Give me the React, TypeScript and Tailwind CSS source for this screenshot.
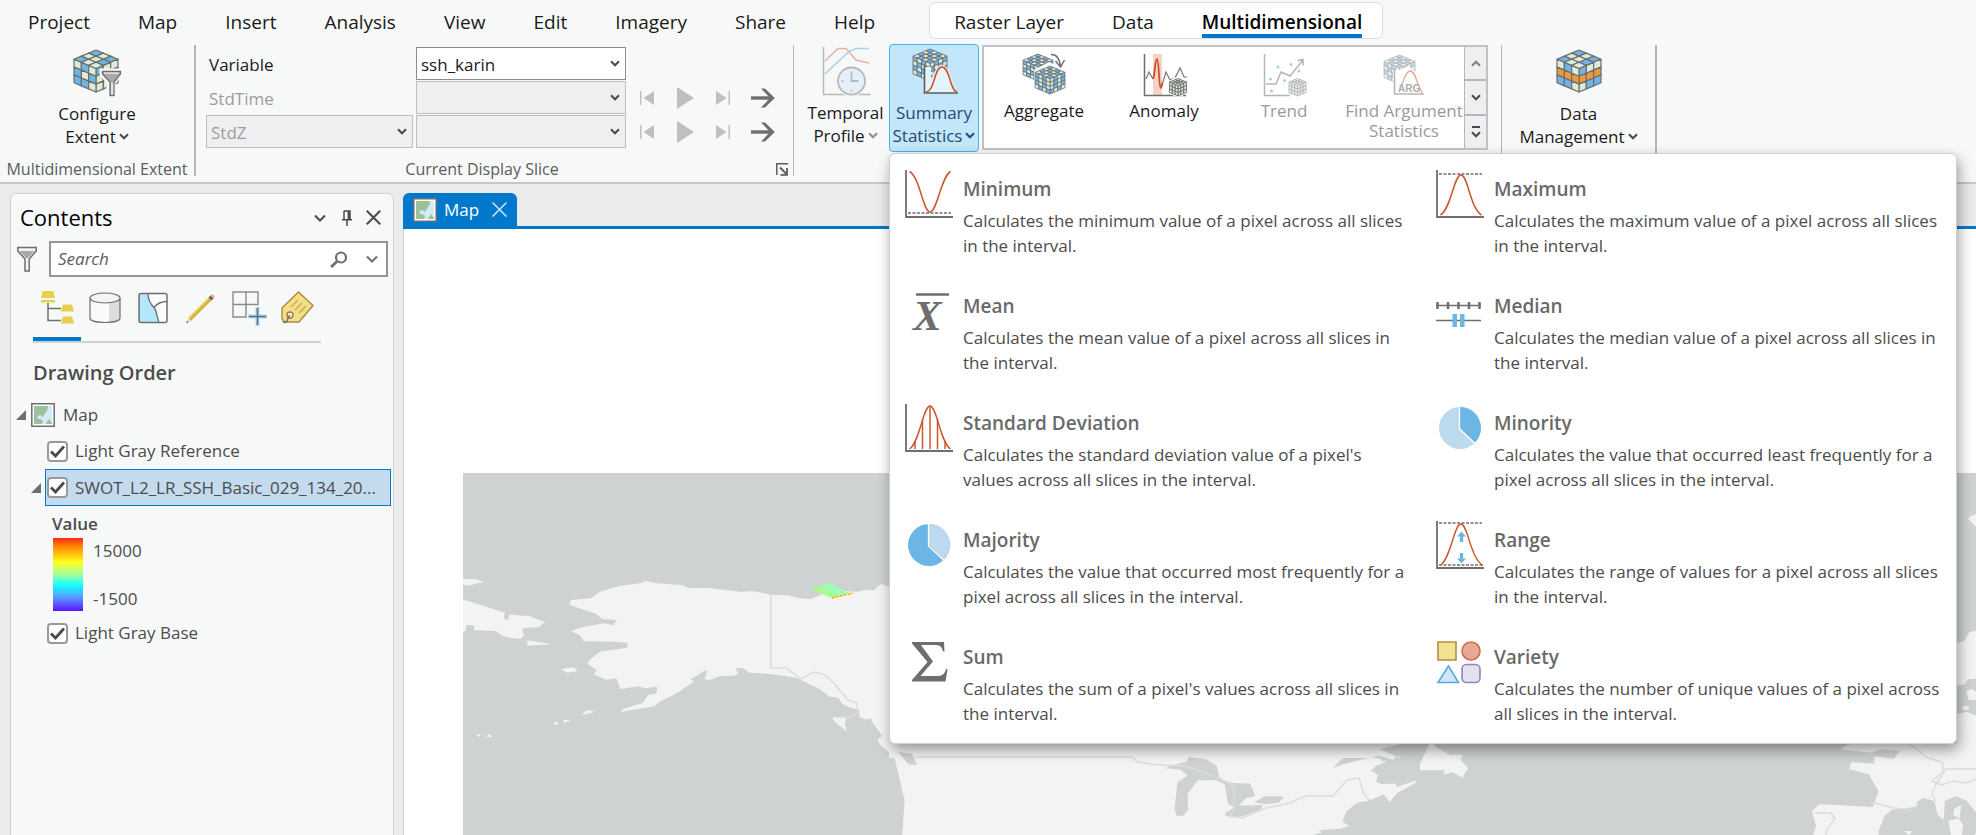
import React, { useState } from "react";

const CELL = { b: "#6cb5e4", g: "#dcecd6", o: "#ee9a3c", w: "#e4ece0" } as const;
type CellKey = keyof typeof CELL;

/* ---------- ribbon drawings ---------- */

function Cube({
  n,
  x,
  y,
  w,
  h,
  top,
  left,
  right,
  stroke = 1.2,
}: {
  n: number;
  x: number;
  y: number;
  w: number;
  h: number;
  top: string;
  left: string;
  right: string;
  stroke?: number;
}) {
  const hw = w / 2;
  const rise = w * 0.21;
  const body = h - rise * 2;
  const cells: React.ReactElement[] = [];
  const add = (key: string, c: string, pts: number[][]) =>
    cells.push(<polygon key={key} points={pts.map((p) => p.join(",")).join(" ")} fill={CELL[(c || "g") as CellKey]} />);
  const t = (i: number, j: number) => [x + hw + ((i - j) * hw) / n, y + ((i + j) * rise) / n];
  const l = (i: number, j: number) => [x + (i * hw) / n, y + rise + (i * rise) / n + (j * body) / n];
  const r = (i: number, j: number) => [x + hw + (i * hw) / n, y + 2 * rise - (i * rise) / n + (j * body) / n];
  for (let j = 0; j < n; j++)
    for (let i = 0; i < n; i++) {
      const k = j * n + i;
      add(`t${k}`, top[k], [t(i, j), t(i + 1, j), t(i + 1, j + 1), t(i, j + 1)]);
      add(`l${k}`, left[k], [l(i, j), l(i + 1, j), l(i + 1, j + 1), l(i, j + 1)]);
      add(`r${k}`, right[k], [r(i, j), r(i + 1, j), r(i + 1, j + 1), r(i, j + 1)]);
    }
  return (
    <g stroke="#6e6e6e" strokeWidth={stroke} strokeLinejoin="round">
      {cells}
    </g>
  );
}

const T3 = "bgbggbbgg";
const T4 = "bgbggbgbbgbggbgb";
const L4 = "bgbggbgbbgbggbgb";
const R4 = "gbgbbgbggbgbbgbg";

function Ico({ size = 48, children, className = "" }: { size?: number; children: React.ReactNode; className?: string }) {
  return (
    <svg
      width={size}
      height={size}
      viewBox="0 0 48 48"
      fill="none"
      className={`shrink-0 overflow-visible ${className}`}
      aria-hidden="true"
    >
      {children}
    </svg>
  );
}

const ConfigureIcon = () => (
  <Ico>
    <Cube n={3} x={1} y={2} w={44} h={42} top={T3} left="gbgbgbbbg" right="bgggggggg" />
    <path d="M28 22h20v4l-7 9v13h-6V35l-7-9z" fill="#f7f9f8" stroke="#f7f9f8" strokeWidth="3" />
    <path d="M29.500 23.500h18v2.500l-6.500 8v13.500h-4V34l-7.500-8z" fill="#a8a8a8" stroke="#6e6e6e" strokeWidth="1.300" />
    <path d="M31 24.500h15v1.200H31z" fill="#f2f2f2" />
    <path d="M38 34.500h2.300v12H38z" fill="#e4e4e4" />
  </Ico>
);

const TemporalIcon = () => (
  <Ico className="opacity-45">
    <path d="M1.500 0v47.500h47" stroke="#6e6e6e" strokeWidth="1.500" />
    <path d="M3 14 16 1.500h8L34 13l13 3" stroke="#dd5a33" strokeWidth="1.500" />
    <path d="M3 27 27 4.500 34 1.500h13" stroke="#4ba3dd" strokeWidth="1.500" />
    <circle cx="29.500" cy="34" r="15.500" fill="#f7f9f8" />
    <circle cx="29.500" cy="34" r="13.500" fill="#cfe3f6" stroke="#6e6e6e" strokeWidth="1.800" />
    <path d="M29.500 24.500v9.500h7" stroke="#6e6e6e" strokeWidth="1.800" />
    <path d="M19.500 34h2M29.500 42.500v2" stroke="#6e6e6e" strokeWidth="1.500" />
  </Ico>
);

const SummaryIcon = () => (
  <Ico>
    <Cube n={4} x={3} y={2} w={34} h={32} top={T4} left={L4} right={R4} stroke={0.9} />
    <path d="M15 20v26h32L38 22q-6-8-12 0l-5 10V20z" fill="#e4f3fc" />
    <path d="M14.500 18v28H48" stroke="#5c5c5c" strokeWidth="1.600" />
    <path d="M16 45c9-1 8-25 16-25s8 24 15 25" stroke="#cf4f28" strokeWidth="1.500" />
  </Ico>
);

const AggregateIcon = () => (
  <Ico>
    <Cube n={4} x={3} y={4} w={30} h={27} top={T4} left={L4} right={R4} stroke={0.8} />
    <path d="M14 20 29 12l18 8v20L30 47 14 40z" fill="#fff" />
    <Cube n={4} x={15} y={16} w={30} h={28} top={T4} left="bgbgbgbgbgbggbgb" right="gbgbgbgbgbgbbgbg" stroke={0.8} />
    <path d="M31 4.500q8-.500 9.500 12M35.500 11l5 6 4-7" stroke="#6e6e6e" strokeWidth="1.500" />
  </Ico>
);

const AnomalyIcon = () => (
  <Ico>
    <path d="M13 4h9v41h-9z" fill="#f3d3c8" />
    <path d="M4.500 4v41.500H46" stroke="#6e6e6e" strokeWidth="1.500" />
    <path d="M6 29l3-7 4 7M22 35l4-13 4 8 5-2 5-10 4 9h3" stroke="#777" strokeWidth="1.200" />
    <path d="M13 29c2-4 2-20 4-20s2 29 3.500 29 1-3 2-5" stroke="#cf4f28" strokeWidth="1.800" />
    <circle cx="38" cy="37" r="10" fill="#fff" />
    <Cube n={3} x={29.5} y={28.5} w={17} h={17.5} top="ggggggggg" left="ggggggggg" right="ggggggggg" stroke={0.9} />
  </Ico>
);

const TrendIcon = () => (
  <Ico className="opacity-50">
    <path d="M4.500 4v41.500H30" stroke="#6e6e6e" strokeWidth="1.500" />
    <path d="M6 34h10l5-12 9 4L43 10M37.500 10.500 43 9.500v6" stroke="#6e6e6e" strokeWidth="1.500" />
    <g fill="#4ba3dd">
      <circle cx="18" cy="17" r="1.500" />
      <circle cx="31" cy="14.500" r="1.500" />
      <circle cx="39" cy="21" r="1.500" />
      <circle cx="10.500" cy="29" r="1.500" />
      <circle cx="24.500" cy="30.500" r="1.500" />
      <circle cx="11.500" cy="41" r="1.500" />
    </g>
    <Cube n={3} x={29} y={28.5} w={17} h={17.5} top="ggggggggg" left="ggggggggg" right="ggggggggg" stroke={0.9} />
  </Ico>
);

const ArgumentIcon = () => (
  <Ico className="opacity-50">
    <Cube n={4} x={4} y={5} w={31} h={29} top={T4} left={L4} right={R4} stroke={0.8} />
    <path d="M13 20 20 20 28 16 36 22 42 34H13z" fill="#fff" />
    <path d="M14.500 19v25H44" stroke="#6e6e6e" strokeWidth="1.600" />
    <path d="M22 34c3-6 4-13 8-13s6 7 8 13l4 9" stroke="#cf4f28" strokeWidth="1.300" />
    <text x="18" y="42" fontFamily="Liberation Sans" fontWeight="700" fontSize="10" fill="#5c5c5c">
      ARG
    </text>
  </Ico>
);

const DataIcon = () => (
  <Ico>
    <Cube n={3} x={2} y={2} w={44} h={42} top={T3} left="gbgooobbg" right="bggooogbb" />
  </Ico>
);

/* ---------- statistic drawings ---------- */

const Axes = () => <path d="M1 0v47h47" stroke="#6e6e6e" strokeWidth="1.800" />;

const stats: { name: string; text: string; icon: React.ReactElement }[] = [
  {
    name: "Minimum",
    text: "Calculates the minimum value of a pixel across all slices in the interval.",
    icon: (
      <Ico>
        <Axes />
        <path d="M3 43h43" stroke="#6e6e6e" strokeWidth="1.500" strokeDasharray="3 1.500" />
        <path d="M4.500 1.500C15 7 18 42 25 42S36 7 45.500 1.500" stroke="#d0532c" strokeWidth="1.500" />
      </Ico>
    ),
  },
  {
    name: "Maximum",
    text: "Calculates the maximum value of a pixel across all slices in the interval.",
    icon: (
      <Ico>
        <Axes />
        <path d="M3 4h43" stroke="#6e6e6e" strokeWidth="1.500" strokeDasharray="3 1.500" />
        <path d="M4.500 45C15 39 18 5 25 5s9 33 20.500 40" stroke="#d0532c" strokeWidth="1.500" />
      </Ico>
    ),
  },
  {
    name: "Mean",
    text: "Calculates the mean value of a pixel across all slices in the interval.",
    icon: (
      <Ico>
        <path d="M11 7.500h33" stroke="#6e6e6e" strokeWidth="2.500" />
        <text x="8" y="43" fontFamily="Liberation Serif" fontStyle="italic" fontWeight="700" fontSize="43" fill="#6e6e6e">
          X
        </text>
      </Ico>
    ),
  },
  {
    name: "Median",
    text: "Calculates the median value of a pixel across all slices in the interval.",
    icon: (
      <Ico>
        <path d="M0 18.500h45M0 33.500h45" stroke="#6e6e6e" strokeWidth="1.500" />
        <path d="M1.500 15v7M12 15v7M22.500 15v7M33 15v7M43.500 15v7" stroke="#6e6e6e" strokeWidth="2.500" />
        <path d="M16.500 27H21v13h-4.500zM24 27h4.500v13H24z" fill="#6cb5e4" />
      </Ico>
    ),
  },
  {
    name: "Standard Deviation",
    text: "Calculates the standard deviation value of a pixel's values across all slices in the interval.",
    icon: (
      <Ico>
        <Axes />
        <path d="M4.500 45C15 38 18 2 25 2s10 36 20.500 43" stroke="#d0532c" strokeWidth="1.400" />
        <path d="M10 37v8M17.500 15v30M25 2v43M32.500 15v30M40 37v8" stroke="#d0532c" strokeWidth="1.500" />
      </Ico>
    ),
  },
  {
    name: "Minority",
    text: "Calculates the value that occurred least frequently for a pixel across all slices in the interval.",
    icon: (
      <Ico>
        <circle cx="24" cy="24" r="21" fill="#bcdaee" />
        <path d="M24 24V3a21 21 0 0 1 14.800 35.800z" fill="#6cb5e4" />
        <path d="M23.500 3v22L39 39.500" stroke="#fff" strokeWidth="1.300" />
      </Ico>
    ),
  },
  {
    name: "Majority",
    text: "Calculates the value that occurred most frequently for a pixel across all slices in the interval.",
    icon: (
      <Ico>
        <circle cx="24" cy="24" r="21" fill="#6cb5e4" />
        <path d="M24 24V3a21 21 0 0 1 14.800 35.800z" fill="#bcdaee" />
        <path d="M23.500 3v22L39 39.500" stroke="#fff" strokeWidth="1.300" />
      </Ico>
    ),
  },
  {
    name: "Range",
    text: "Calculates the range of values for a pixel across all slices in the interval.",
    icon: (
      <Ico>
        <Axes />
        <path d="M3 2h43M3 44h43" stroke="#6e6e6e" strokeWidth="1.500" strokeDasharray="3 1.500" />
        <path d="M4.500 44C15 37 18 3 25 3s9 34 22 41.500" stroke="#d0532c" strokeWidth="1.400" />
        <path d="M25.500 10.500l4.500 5h-2.800v5.500h-3.400v-5.500H21zM25.500 42.500l-4.500-5h2.800V32h3.400v5.500H30z" fill="#6cb5e4" />
      </Ico>
    ),
  },
  {
    name: "Sum",
    text: "Calculates the sum of a pixel's values across all slices in the interval.",
    icon: (
      <Ico>
        <path d="M7 4h32l.5 9.500H38C37 9 35 7 30.500 7H16l12 16.500L15.500 38H33c5 0 7-3 8-7h1.500l-2 12.500H7V42l15.500-18L7 5.500z" fill="#6e6e6e" />
      </Ico>
    ),
  },
  {
    name: "Variety",
    text: "Calculates the number of unique values of a pixel across all slices in the interval.",
    icon: (
      <Ico>
        <path d="M2 4h18v18H2z" fill="#f1e390" stroke="#b98a44" strokeWidth="1.600" />
        <circle cx="35" cy="13" r="9" fill="#e8a896" stroke="#cf6a4c" strokeWidth="1.600" />
        <path d="M12.500 28 22.500 44.500H2z" fill="#cfe6f6" stroke="#5ba9dc" strokeWidth="1.600" />
        <rect x="26" y="26.500" width="18" height="18" rx="4.500" fill="#e4e0f0" stroke="#9583bf" strokeWidth="1.600" />
      </Ico>
    ),
  },
];

/* ---------- small drawings ---------- */

const Chevron = ({ className = "" }: { className?: string }) => (
  <svg width="10" height="7" viewBox="0 0 10 7" fill="none" className={`shrink-0 ${className}`} aria-hidden="true">
    <path d="M1 1.300l4 4 4-4" stroke="currentColor" strokeWidth="2" />
  </svg>
);

const MapThumb = () => (
  <svg width="24" height="24" viewBox="0 0 24 24" className="shrink-0" aria-hidden="true">
    <path d="M.8.8h22.400v22.400H.8z" fill="#fff" stroke="#6e6e6e" strokeWidth="1.500" />
    <path d="M3 3h18v18H3z" fill="#9bc19b" />
    <path d="M17 3h4v16h-1.500l-1-3-2 2-1.500 3h-4l1-3-2.500-2H7l-.5-3 3-1 2 2 3-4 2-3z" fill="#d3ebf8" />
  </svg>
);

const FunnelIcon = () => (
  <svg width="20" height="26" viewBox="0 0 20 26" fill="none" className="shrink-0" aria-hidden="true">
    <path d="M.8 1.500h18.400V5l-7 8v12H8V13L.8 5z" fill="#f4f4f4" stroke="#6e6e6e" strokeWidth="1.500" />
    <path d="M2.500 5h15L11 12H9z" fill="#a8a8a8" />
  </svg>
);

const MediaRow = () => (
  <div className="flex h-[33px] items-center">
    <button aria-label="Previous slice" className="w-4">
      <svg width="14" height="14" viewBox="0 0 14 14" fill="#bfbfbf">
        <path d="M0 0h1.500v14H0zM14 0v14L3.500 7z" />
      </svg>
    </button>
    <button aria-label="Play" className="ml-[21px] w-5">
      <svg width="17" height="22" viewBox="0 0 17 22" fill="#bfbfbf">
        <path d="M0 0l17 11L0 22z" />
      </svg>
    </button>
    <button aria-label="Next slice" className="ml-[19px] w-4">
      <svg width="14" height="14" viewBox="0 0 14 14" fill="#bfbfbf">
        <path d="M12.500 0H14v14h-1.500zM0 0v14l10.500-7z" />
      </svg>
    </button>
    <button aria-label="Step forward" className="ml-[19px]">
      <svg width="24" height="20" viewBox="0 0 24 20" fill="none" stroke="#6e6e6e">
        <path d="M0 10h21" strokeWidth="3.400" />
        <path d="M10 .5h4L23.800 10 14 19.500h-4L19 10z" fill="#6e6e6e" stroke="none" />
      </svg>
    </button>
  </div>
);

function Combo({ label, value, enabled = false, className }: { label: string; value: string; enabled?: boolean; className: string }) {
  return (
    <span className={`grid items-center ${className}`}>
      <select
        aria-label={label}
        defaultValue={value}
        disabled={!enabled}
        className={`col-start-1 row-start-1 h-[33px] w-full appearance-none border pl-1 pt-0.5 leading-7 opacity-100 ${
          enabled ? "border-[#8c8c8c] bg-white text-[#1a1a1a]" : "border-[#bcbec2] bg-[#eeeff1] text-[#9c9c9c]"
        }`}
      >
        <option value={value}>{value}</option>
      </select>
      <Chevron className="pointer-events-none col-start-1 row-start-1 mr-1.5 justify-self-end text-[#4a4a4a]" />
    </span>
  );
}

/* ---------- ribbon ---------- */

const tabs = ["Project", "Map", "Insert", "Analysis", "View", "Edit", "Imagery", "Share", "Help"];

function RibbonTabs() {
  return (
    <nav className="flex h-11 items-center text-[19px] leading-6 text-[#1a1a1a]">
      <div className="flex gap-12 pl-7">
        {tabs.map((t) => (
          <button key={t}>{t}</button>
        ))}
      </div>
      <div className="ml-[54px] mt-[-3px] flex h-[37px] gap-12 rounded-md border border-[#dcdedd] bg-white pl-6 pr-5">
        <button className="pt-[3px]">Raster Layer</button>
        <button className="pt-[3px]">Data</button>
        <button className="border-b-4 border-[#0079cc] pt-[7px] font-semibold text-black">Multidimensional</button>
      </div>
    </nav>
  );
}

const Divider = ({ className = "w-px" }: { className?: string }) => <div className={`mt-px mb-1.5 shrink-0 bg-[#b4b5b5] ${className}`} />;

function BigButton({
  icon,
  lines,
  className = "",
  chevron = "text-[#4a4a4a]",
}: {
  icon: React.ReactElement;
  lines: [string, string];
  className?: string;
  chevron?: string;
}) {
  return (
    <button className={`flex flex-col items-center leading-[23px] ${className}`}>
      {icon}
      <span className="mt-1.5">{lines[0]}</span>
      <span className="flex items-center gap-[3px] whitespace-nowrap">
        {lines[1]}
        <Chevron className={chevron} />
      </span>
    </button>
  );
}

function StatisticsMenu() {
  return (
    <div
      role="menu"
      className="absolute left-0 top-full z-10 grid w-[1068px] grid-cols-2 rounded-md border border-[#d0d1d1] bg-white p-0.5 text-left shadow-[2px_6px_14px_rgba(0,0,0,0.38)]"
    >
      {stats.map((s) => (
        <button key={s.name} role="menuitem" className="flex h-[117px] items-start gap-[10px] pl-[13px] pt-[14px] text-left">
          {s.icon}
          <span className="flex flex-col pt-[7px]">
            <span className="text-[19px] font-semibold leading-6 text-[#696969]">{s.name}</span>
            <span className="mt-[7px] max-w-[452px] text-[17px] leading-[25px] text-[#4c4c4c]">{s.text}</span>
          </span>
        </button>
      ))}
    </div>
  );
}

const gallery = [
  { name: "Aggregate", icon: <AggregateIcon />, on: true },
  { name: "Anomaly", icon: <AnomalyIcon />, on: true },
  { name: "Trend", icon: <TrendIcon />, on: false },
  { name: "Find Argument Statistics", icon: <ArgumentIcon />, on: false },
];

function Ribbon() {
  return (
    <header className="border-b-2 border-[#c6c6c8] bg-[#f7f9f8]">
      <RibbonTabs />
      <div className="flex h-[138px] text-[17px] text-[#1a1a1a]">
        <section className="flex w-[194px] shrink-0 flex-col items-center justify-between pb-0.5">
          <BigButton icon={<ConfigureIcon />} lines={["Configure", "Extent"]} className="pt-1" />
          <h2 className="whitespace-nowrap text-[16px] leading-[22px] text-[#5c5c5c]">Multidimensional Extent</h2>
        </section>
        <Divider className="w-0.5" />
        <section className="flex w-[597px] shrink-0 flex-col justify-between pb-0.5 pl-[10px]">
          <div className="flex gap-[14px] pt-[3px]">
            <div className="grid grid-cols-[207px_210px] items-center gap-x-[3px] gap-y-px">
              <span className="pl-[3px] pt-0.5">Variable</span>
              <Combo label="Variable" value="ssh_karin" enabled className="w-[210px]" />
              <span className="pl-[3px] pt-0.5 text-[#9c9c9c]">StdTime</span>
              <Combo label="StdTime" value="" className="w-[210px]" />
              <Combo label="Dimension" value="StdZ" className="w-[207px]" />
              <Combo label="StdZ" value="" className="w-[210px]" />
            </div>
            <div className="flex flex-col gap-px pt-[34px]">
              <MediaRow />
              <MediaRow />
            </div>
          </div>
          <div className="flex items-center pr-[5px] text-[16px] leading-[22px] text-[#5c5c5c]">
            <h2 className="flex-1 pr-[18px] text-center">Current Display Slice</h2>
            <button aria-label="Open slice options">
              <svg width="12" height="13" viewBox="0 0 12 13" fill="none" stroke="#5c5c5c">
                <path d="M.8 12V.8H12" strokeWidth="1.500" />
                <path d="M4 4.500l6.500 6.500M11 5v6.800H4.500" strokeWidth="1.800" />
              </svg>
            </button>
          </div>
        </section>
        <Divider />
        <BigButton
          icon={<TemporalIcon />}
          lines={["Temporal", "Profile"]}
          className="w-[95px] shrink-0 pl-2 pt-[3px]"
          chevron="text-[#8c8c8c]"
        />
        <div className="relative h-[109px] w-[90px] shrink-0">
          <BigButton
            icon={<SummaryIcon />}
            lines={["Summary", "Statistics"]}
            className="h-[108px] w-full rounded border border-[#4bb1ec] bg-[#c2e6fa] pt-[2px] text-[#264a73]"
            chevron="text-[#264a73]"
          />
          <StatisticsMenu />
        </div>
        <div className="ml-[3px] mt-px flex h-[105px] shrink-0 border-2 border-[#c0c2c6] bg-white leading-5">
          {gallery.map((g) => (
            <button
              key={g.name}
              className={`flex w-[120px] flex-col items-center pt-[3px] ${g.on ? "text-[#1a1a1a]" : "text-[#9a9a9a]"}`}
            >
              {g.icon}
              <span className="mt-[3px]">{g.name}</span>
            </button>
          ))}
          <div className="flex w-[22px] flex-col divide-y-2 divide-[#b4b6bc] border-l border-[#b4b6bc] bg-[#eeeff1] text-[#4a4a4a]">
            <button aria-label="Scroll up" className="flex flex-1 items-center justify-center text-[#808080]">
              <Chevron className="rotate-180" />
            </button>
            <button aria-label="Scroll down" className="flex flex-1 items-center justify-center">
              <Chevron />
            </button>
            <button aria-label="More" className="flex flex-1 flex-col items-center justify-center gap-[3px]">
              <span className="h-[2px] w-2 bg-[#4a4a4a]" />
              <Chevron />
            </button>
          </div>
        </div>
        <Divider className="ml-[13px] w-px" />
        <BigButton icon={<DataIcon />} lines={["Data", "Management"]} className="w-[153px] shrink-0 pt-1" />
        <Divider className="w-0.5" />
      </div>
    </header>
  );
}

/* ---------- contents pane ---------- */

const views = [
  {
    label: "List by drawing order",
    icon: (
      <>
        <path d="M4 1h10l2 7H2zM2 10h14v2.500H2z" fill="#e6cf4e" />
        <path d="M9 13v17.500h13M9 18.500h13" fill="none" stroke="#6e6e6e" strokeWidth="1.500" />
        <path d="M24 14.500h9l2 7H22zM24 26.500h9l2 7H22z" fill="#e6cf4e" />
      </>
    ),
  },
  {
    label: "List by data source",
    icon: (
      <>
        <path d="M3 8v20c0 6 30 6 30 0V8z" fill="#fafafa" />
        <path d="M22 12c6 0 10-2 11-4v20c-1 3-6 4-11 4.500z" fill="#dcdcdc" />
        <path d="M3 8v20c0 6 30 6 30 0V8" fill="none" stroke="#6e6e6e" strokeWidth="1.200" />
        <ellipse cx="18" cy="8" rx="15" ry="5" fill="#f4f4f4" stroke="#6e6e6e" strokeWidth="1.200" />
      </>
    ),
  },
  {
    label: "List by selection",
    icon: (
      <>
        <rect x="4" y="3.500" width="28" height="29" rx="2" fill="#fbfbfb" />
        <path d="M4 3.500h9c0 5 2 10 6 14 3 4 3 10 5 15H4z" fill="#b3e8fa" />
        <path d="M13 3.500c0 5 2 10 6 14 3 4 3 10 5 15M19 17.500c3-4 7-6 13-6" fill="none" stroke="#6e6e6e" strokeWidth="1.300" />
        <rect x="4" y="3.500" width="28" height="29" rx="2" fill="none" stroke="#6e6e6e" strokeWidth="1.500" />
      </>
    ),
  },
  {
    label: "List by editing",
    icon: (
      <>
        <path d="M5 28 25.500 7.500l3 3L8 31z" fill="#e2c750" />
        <path d="M7 30 27.500 9.500" stroke="#c9ac3e" strokeWidth="1.200" />
        <path d="M5 28l3 3-5 2z" fill="#f1d9b8" />
        <path d="M4 31l1.600 1.100L3 33.200z" fill="#555" />
        <path d="M25.500 7.500l2-2 3 3-2 2z" fill="#6a5f62" />
        <path d="M27.500 5.500c2-3 6 1 3 3z" fill="#e8a393" />
      </>
    ),
  },
  {
    label: "List by snapping",
    icon: (
      <>
        <path d="M2 2h25v12.500H2zM2 14.500h13V27H2zM15 2v12.500" fill="none" stroke="#8a8a8a" strokeWidth="1.400" />
        <path d="M26.500 17v19M17 26.500h19" stroke="#a9d9f8" strokeWidth="4" />
        <path d="M26.500 18v17M18 26.500h17" stroke="#5c6d7a" strokeWidth="1.500" />
      </>
    ),
  },
  {
    label: "List by labeling",
    icon: (
      <>
        <path d="M3 18 19.500 2 34 15.500 20 32H6l-3-3z" fill="#f1e08a" stroke="#b5853f" strokeWidth="1.400" />
        <path d="M12 17l7-7M16 20l7-7M20 23l7-7" stroke="#d0a24c" strokeWidth="1.200" />
        <circle cx="11" cy="25" r="3" fill="#fdf8e0" stroke="#a5743a" strokeWidth="1.300" />
        <path d="M11 25c-2 2-2 4-3 6s-4 2-4 0" fill="none" stroke="#6e6e6e" strokeWidth="1.300" />
      </>
    ),
  },
];

function LayerCheck({ id, label, className = "" }: { id: string; label: string; className?: string }) {
  const [on, setOn] = useState(true);
  return (
    <div className={`flex min-w-0 items-center gap-[7px] ${className}`}>
      <span className="grid shrink-0 place-items-center">
        <input
          id={id}
          type="checkbox"
          checked={on}
          onChange={() => setOn(!on)}
          className="col-start-1 row-start-1 size-[21px] appearance-none rounded-[4px] border-2 border-[#9a9a9a] bg-white"
        />
        {on && (
          <svg width="15" height="13" viewBox="0 0 15 13" fill="none" className="pointer-events-none col-start-1 row-start-1">
            <path d="M1 6.500l4.500 4.500L14 1.500" stroke="#4a4a4a" strokeWidth="2.800" />
          </svg>
        )}
      </span>
      <label htmlFor={id} className="truncate">
        {label}
      </label>
    </div>
  );
}

const Expander = () => (
  <button aria-label="Collapse" className="shrink-0">
    <svg width="10" height="10" viewBox="0 0 10 10" fill="#6e6e6e">
      <path d="M10 0v10H0z" />
    </svg>
  </button>
);

function Contents() {
  return (
    <aside className="flex w-[384px] shrink-0 flex-col rounded-t-md border border-b-0 border-[#d0d1d1] bg-[#f7f9f8] text-[17px] text-[#4c4c4c]">
      <div className="flex h-[47px] items-center pl-[9px] pr-3 text-[#4a4a4a]">
        <h1 className="flex-1 text-[22px] text-black">Contents</h1>
        <button aria-label="Pane options" className="mr-4">
          <svg width="12" height="8" viewBox="0 0 12 8" fill="none" stroke="currentColor" strokeWidth="2">
            <path d="M1 1.500l5 5 5-5" />
          </svg>
        </button>
        <button aria-label="Pin" className="mr-[14px]">
          <svg width="10" height="16" viewBox="0 0 10 16" fill="none" stroke="currentColor" strokeWidth="1.500">
            <path d="M2 1h6v8.500M2 1v8.500M0 9.800h10M5 10v6" />
            <path d="M6.800 1v8.500" strokeWidth="2.400" />
          </svg>
        </button>
        <button aria-label="Close">
          <svg width="15" height="15" viewBox="0 0 15 15" fill="none" stroke="currentColor" strokeWidth="2">
            <path d="M.8.8l13.400 13.400M14.200.8.8 14.200" />
          </svg>
        </button>
      </div>
      <div className="flex items-center gap-3 pl-1.5 pr-[5px]">
        <FunnelIcon />
        <div className="flex h-9 flex-1 items-center border-2 border-[#949494] bg-white pl-[7px] pr-2">
          <input type="search" aria-label="Search" placeholder="Search" className="min-w-0 flex-1 italic outline-none placeholder:text-[#5c5c5c]" />
          <svg width="18" height="17" viewBox="0 0 18 17" fill="none" stroke="#6e6e6e" aria-hidden="true">
            <circle cx="11" cy="6.500" r="5" strokeWidth="2.200" />
            <path d="M7 10.500 1 16" strokeWidth="2.800" />
          </svg>
          <button aria-label="Search options" className="ml-[18px] text-[#6e6e6e]">
            <svg width="12" height="8" viewBox="0 0 12 8" fill="none" stroke="currentColor" strokeWidth="2">
              <path d="M1 1.500l5 5 5-5" />
            </svg>
          </button>
        </div>
      </div>
      <div className="ml-[22px] mt-[13px] flex w-[288px] border-b-2 border-[#d0d2d2]">
        {views.map((v, i) => (
          <button
            key={v.label}
            aria-label={v.label}
            className={`flex h-[51px] w-12 justify-center border-b-4 ${i === 0 ? "-mb-px border-[#0079cc]" : "border-transparent"}`}
          >
            <svg width="36" height="36" viewBox="0 0 36 36" aria-hidden="true">
              {v.icon}
            </svg>
          </button>
        ))}
      </div>
      <h2 className="mt-4 pl-[22px] text-[20px] font-semibold leading-7">Drawing Order</h2>
      <div className="mt-[10px] flex h-9 items-center pl-[5px]">
        <Expander />
        <span className="ml-[5px]">
          <MapThumb />
        </span>
        <span className="ml-2">Map</span>
      </div>
      <LayerCheck id="layer-reference" label="Light Gray Reference" className="h-9 pl-9" />
      <div className="flex items-center pl-5">
        <Expander />
        <LayerCheck
          id="layer-swot"
          label="SWOT_L2_LR_SSH_Basic_029_134_20..."
          className="ml-1 mr-0.5 h-[37px] flex-1 border border-[#007ac2] bg-[#c4daee] pl-px"
        />
      </div>
      <div className="pl-[41px] pt-1">
        <h3 className="font-semibold leading-7">Value</h3>
        <div className="flex gap-[10px] pl-px">
          <div className="h-[73px] w-[30px] bg-[linear-gradient(to_bottom,#ff2a1a_0%,#ff8a00_12%,#ffff1e_33%,#a0ff9c_50%,#10ffff_65%,#5a96ff_82%,#5a10ff_100%)]" />
          <div className="flex flex-col justify-between pt-px leading-6">
            <span>15000</span>
            <span>-1500</span>
          </div>
        </div>
      </div>
      <LayerCheck id="layer-base" label="Light Gray Base" className="mt-1 h-9 pl-9" />
    </aside>
  );
}

/* ---------- map ---------- */

function WorldMap() {
  return (
    <svg
      className="min-h-0 w-full flex-1 bg-white"
      viewBox="404 228 1572 607"
      preserveAspectRatio="xMinYMin slice"
      role="img"
      aria-label="Light gray world map"
    >
      <path d="M463 472h1600v500H463z" fill="#ced2d2" />
      <g fill="#f3f3f3">
        <g transform="translate(440 440) scale(.33333)">
          <path d="M69 414l36-1 26 10-26 6-20 5-16-2zM69 475l125 40-2 18 12 4 4-17 20 3 40 2 47 19-20 15-45 2-3 9 5 13-10 10-25-1-30-8-20-14-65-2v-15l-22-1-3 15-8 8zM262 598l74 12-74 4zM363 684l40-5 8 12-30 4zM340 851l6-10 11 8zM370 836l22 2-20 8zM425 823l15-16 25 5zM108 881l10 8 4-9zM138 888l10-9 10 8zM666 746l25-3 30-17 7 20-44 24zM1178 827l40 4-3 20 5 20-38-30z" />
          <path d="M388 491l6-14 60-5 25-20 60-17 62-8 18-7 30 7 77 5 22 9 60 0 90 11 45-1 50 10 50 2 30 8 40 3 60-25 80 3 20-5 30 1 20-20 80 30v500l-40-15-30-20-15-14-5-15 14-9-32-45-1-8-15 4-21-9v-20l-30-8-20-10-12-18-30-5-10-10-25-16-60-28-33-7-60-7-50-3-17-13-25 0 10 16-15 6-40 1-30 12-17-2 8-30-50 30 10 8-45 28-55 30-20 15-100 17 5-8 40-13 20-5 18-25 25-5 1-20-35 5-20-6-55 8-12-32-30 4-38-16 9-12-25-18 0-10 35-28 82-12v-14l-35-4-95-1-12-18-27-12 40-14 60-10 25 6 14-16-46-3-15-14z" />
        </g>
        <path d="M889 710h531v47H889z" />
        <g transform="translate(890 450) scale(.33807 .33333)">
          <path d="M0 860h1568l-175 32-60 35-25 24 60-19 90-20-5 18 20-1-35 15-15 15 20 12-5 22 18 6 45-1 50-32 2 20 12 5-65 35-22 28-18-24-40 18-40 8-30 25-12 32 22 12-30 8-62 5 10 6-40 12-15 15-10 60H50l-17-28 10-155L10 905 0 870z" />
        </g>
      </g>
      <g transform="translate(890 450) scale(.33807 .33333)" fill="#ced2d2">
        <path d="M1568 870h100v330h-100v-170l-25-10 15-32-60 20-2-60-30-20-40-10 60-10 40 30-8-15-70-28 80-20zM25 903l40 6 15 32-22 0-10-8zM788 974l40-30 50-12 4-14 50 6 35 20 8 40 40 12 50 2 15 36-15 6-10 0-30 30-25-10-10-60-25-12-55 0-30 40 2 50-14 16-20 0-6-20 8-80 30-20-20-18-40-4zM990 1086l40-22 72-2-5 14-50 18-30 6-25-6zM1078 1054l30-18 40 0 18 2-15 16-40 6z" />
        <path d="M1408 885l90 30-10 12-70-22z" fill="#f3f3f3" />
      </g>
      <g fill="#f3f3f3" transform="translate(1420 450) scale(.35461 .33333)">
        <path d="M30 870l20 22 35 20h35l-5 15 20 25-15 28-30-16-25 8 5-14H0v-20z" />
        <path d="M1185 895l30-18h500v300h-220l-5-60-30-25-10-42-30-10-18 12-2 15-70 10-20 18-16 42-2 50h-195l20-62-12-45 22-20 150 8 16-48-28-50-55-16 6-20 65 4v-22l55 8 16-24-50-5-30 10z" />
        <path d="M1568 190l-15 5-8 10 23 22zM1568 540l-18 3-15 27-23 5v130l24-5 10-15 22-2zM1513 790l30-8 25 12v90h-55zM1540 720l18-6 10 8v24l-20 2zM1530 765h18v12h-18z" />
      </g>
      <g transform="translate(1420 450) scale(.35461 .33333)">
        <path d="M1480 1050l30-14 30 12 28 36v60l-36 60h-60z" fill="#ced2d2" />
        <path d="M1540 1040l28 40v-50zM1506 1075l20-14-4 40-18-8zM1490 1110l28-8 14 20-4 33h-30zM1366 1140h24l-12 12z" fill="#f3f3f3" />
      </g>
      <g fill="none" stroke="#dcdcda" strokeWidth="1.500">
        <path d="M771 593v74h15l15 11 12-7 10 2 10 8 15 18 9 3v9l-5 5h-17" />
        <path d="M915 756h218l4 5 22 3 27 1 33 12 15 8v22l-4 8 12 2 24-10 20-4 20-8h27l14-16 12-2 4 14 6 8" />
        <path d="M1910 743l18 14 14 4 2 10-8 12-4 10 4 8M1976 768l-30 0-14 12 10 4 10-4 14 2 10-4M1871 801l22 6 18 2M1815 812l16 0 4 6-8 10-2 10" />
      </g>
      <path d="M810 588l20-6 17 10-15 5z" fill="#a8fb92" />
      <path d="M829 583l20 9-10 3-16-8z" fill="#9bffb6" />
      <path d="M822 586l17 9" stroke="#cfe0c8" strokeDasharray="2 1" />
      <path d="M832 597l21-5" stroke="#f3b300" strokeWidth="1.500" strokeDasharray="3 1" />
    </svg>
  );
}

export default function App() {
  return (
    <div className="flex min-h-screen flex-col overflow-hidden bg-[#ebebeb] font-['Open_Sans','Noto_Sans',sans-serif]">
      <Ribbon />
      <div className="flex flex-1 gap-[9px] pl-[10px] pt-[9px]">
        <Contents />
        <main className="flex min-w-0 flex-1 flex-col">
          <div className="flex h-9 border-b-[3px] border-[#0079cc]">
            <div className="flex items-center gap-[7px] rounded-t-md bg-[#0079cc] px-[10px] text-[17px] text-white">
              <MapThumb />
              <span>Map</span>
              <button aria-label="Close map" className="ml-1.5">
                <svg width="15" height="15" viewBox="0 0 15 15" stroke="#cfe6f7" strokeWidth="1.500">
                  <path d="M.5.5l14 14M14.500.5l-14 14" />
                </svg>
              </button>
            </div>
          </div>
          <div className="flex min-h-0 flex-1 flex-col border-l border-[#d0d1d1]">
            <WorldMap />
          </div>
        </main>
      </div>
    </div>
  );
}
